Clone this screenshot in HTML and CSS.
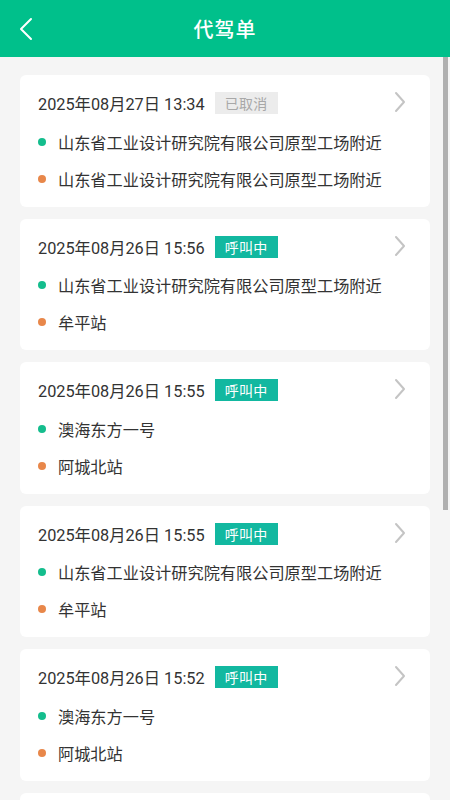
FILE: index.html
```html
<!DOCTYPE html>
<html lang="zh-CN">
<head>
<meta charset="utf-8">
<title>代驾单</title>
<link rel="stylesheet" href="styles.css">
</head>
<body>
<div class="app">
  <header class="topbar">
    <svg class="back" width="14" height="24" viewBox="0 0 14 24"><path d="M12 2 L2 12 L12 22" fill="none" stroke="#fff" stroke-width="2" stroke-linecap="round" stroke-linejoin="round"/></svg>
    <h1 class="title">代驾单</h1>
  </header>
  <main class="list">
    <div class="card">
      <div class="head"><span class="date">2025年08月27日 13:34</span><span class="badge cancel">已取消</span>
        <svg class="arrow" width="12" height="22" viewBox="0 0 12 22"><path d="M2 2 L10 11 L2 20" fill="none" stroke="#c4c4c4" stroke-width="2" stroke-linecap="round" stroke-linejoin="round"/></svg></div>
      <div class="addr"><i class="dot start"></i><span>山东省工业设计研究院有限公司原型工场附近</span></div>
      <div class="addr"><i class="dot end"></i><span>山东省工业设计研究院有限公司原型工场附近</span></div>
    </div>
    <div class="card">
      <div class="head"><span class="date">2025年08月26日 15:56</span><span class="badge calling">呼叫中</span>
        <svg class="arrow" width="12" height="22" viewBox="0 0 12 22"><path d="M2 2 L10 11 L2 20" fill="none" stroke="#c4c4c4" stroke-width="2" stroke-linecap="round" stroke-linejoin="round"/></svg></div>
      <div class="addr"><i class="dot start"></i><span>山东省工业设计研究院有限公司原型工场附近</span></div>
      <div class="addr"><i class="dot end"></i><span>牟平站</span></div>
    </div>
    <div class="card">
      <div class="head"><span class="date">2025年08月26日 15:55</span><span class="badge calling">呼叫中</span>
        <svg class="arrow" width="12" height="22" viewBox="0 0 12 22"><path d="M2 2 L10 11 L2 20" fill="none" stroke="#c4c4c4" stroke-width="2" stroke-linecap="round" stroke-linejoin="round"/></svg></div>
      <div class="addr"><i class="dot start"></i><span>澳海东方一号</span></div>
      <div class="addr"><i class="dot end"></i><span>阿城北站</span></div>
    </div>
    <div class="card">
      <div class="head"><span class="date">2025年08月26日 15:55</span><span class="badge calling">呼叫中</span>
        <svg class="arrow" width="12" height="22" viewBox="0 0 12 22"><path d="M2 2 L10 11 L2 20" fill="none" stroke="#c4c4c4" stroke-width="2" stroke-linecap="round" stroke-linejoin="round"/></svg></div>
      <div class="addr"><i class="dot start"></i><span>山东省工业设计研究院有限公司原型工场附近</span></div>
      <div class="addr"><i class="dot end"></i><span>牟平站</span></div>
    </div>
    <div class="card">
      <div class="head"><span class="date">2025年08月26日 15:52</span><span class="badge calling">呼叫中</span>
        <svg class="arrow" width="12" height="22" viewBox="0 0 12 22"><path d="M2 2 L10 11 L2 20" fill="none" stroke="#c4c4c4" stroke-width="2" stroke-linecap="round" stroke-linejoin="round"/></svg></div>
      <div class="addr"><i class="dot start"></i><span>澳海东方一号</span></div>
      <div class="addr"><i class="dot end"></i><span>阿城北站</span></div>
    </div>
    <div class="card"></div>
  </main>
  <div class="scrollbar"></div>
</div>
</body>
</html>
```
FILE: styles.css
```css
* { box-sizing: border-box; }
html, body { margin: 0; padding: 0; }
body {
  width: 450px;
  height: 800px;
  overflow: hidden;
  background: #f5f5f5;
  font-family: "Roboto", "Noto Sans CJK SC", sans-serif;
  color: #333;
}
.app { position: relative; height: 800px; overflow: hidden; }
.topbar {
  height: 57px;
  background: #00c08b;
  display: flex;
  align-items: center;
  justify-content: center;
  position: relative;
}
.back { position: absolute; left: 19px; top: 17px; }
.title {
  margin: 0;
  color: #fff;
  font-size: 20px;
  font-weight: 500;
  letter-spacing: 1px;
  font-family: "Noto Sans CJK SC", sans-serif;
}
.list {
  display: flex;
  flex-direction: column;
  gap: 12px;
  padding: 18px 20px 0 20px;
}
.card {
  background: #fff;
  border-radius: 6px;
  height: 131.5px;
  flex: none;
  padding: 16px 18px 0 18px;
}
.head {
  display: flex;
  align-items: center;
  height: 24px;
  position: relative;
}
.date { font-size: 16.3px; color: #333; white-space: nowrap; }
.badge {
  margin-left: 10px;
  height: 22px;
  padding: 0 10px;
  font-size: 14px;
  line-height: 22px;
  font-family: "Noto Sans CJK SC", sans-serif;
  letter-spacing: 0.3px;
}
.badge.cancel { background: #ececec; color: #a8a8a8; }
.badge.calling { background: #12b8a0; color: #fff; }
.arrow { position: absolute; right: 6px; top: 0; }
.addr {
  display: flex;
  align-items: center;
  height: 37px;
  font-size: 16.2px;
  letter-spacing: 0;
  font-family: "Noto Sans CJK SC", sans-serif;
  white-space: nowrap;
}
.head + .addr { margin-top: 8px; }
.dot {
  width: 8px;
  height: 8px;
  border-radius: 50%;
  margin-right: 12px;
  flex: none;
}
.dot.start { background: #14bd8d; }
.dot.end { background: #e8874a; }
.scrollbar {
  position: absolute;
  right: 2px;
  top: 57px;
  width: 5px;
  height: 453px;
  background: #b0b0b0;
}
```
